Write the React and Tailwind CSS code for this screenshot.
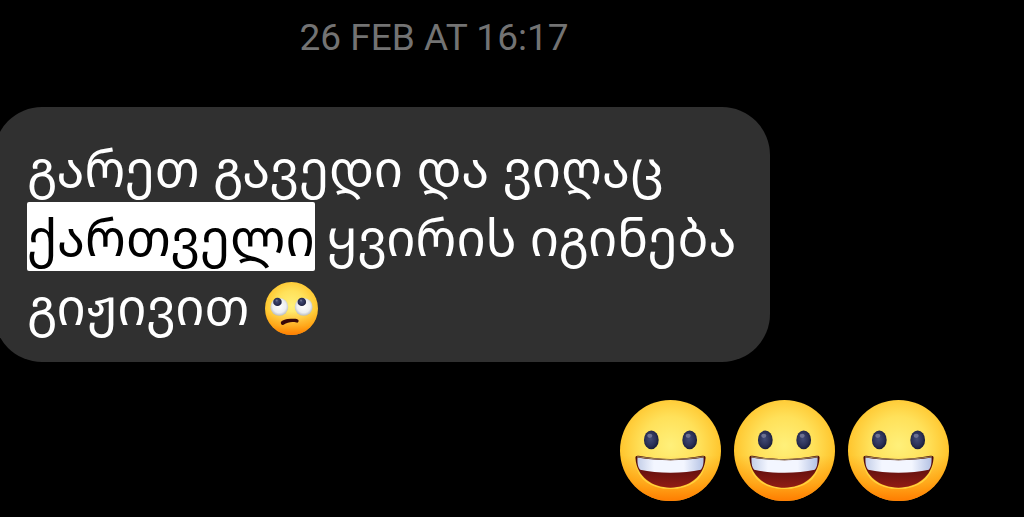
function FaceGradients({ id }) {
  return (
    <defs>
      <radialGradient id={`${id}-face`} cx="50" cy="45" r="57" gradientUnits="userSpaceOnUse">
        <stop offset="0" stopColor="#fff07a" />
        <stop offset="0.5" stopColor="#ffe15a" />
        <stop offset="0.88" stopColor="#ffc52d" />
        <stop offset="1" stopColor="#ffad1f" />
      </radialGradient>
      <linearGradient id={`${id}-shade`} x1="0" y1="0" x2="0" y2="1">
        <stop offset="0.55" stopColor="#ff8600" stopOpacity="0" />
        <stop offset="0.82" stopColor="#ff8600" stopOpacity="0.5" />
        <stop offset="1" stopColor="#ff7a00" stopOpacity="0.95" />
      </linearGradient>
      <radialGradient id={`${id}-pupil`} cx="0.45" cy="0.45" r="0.6">
        <stop offset="0" stopColor="#424b75" />
        <stop offset="0.6" stopColor="#2b3157" />
        <stop offset="1" stopColor="#151832" />
      </radialGradient>
      <radialGradient id={`${id}-white`} cx="0.5" cy="0.45" r="0.58">
        <stop offset="0" stopColor="#ffffff" />
        <stop offset="0.65" stopColor="#eceef0" />
        <stop offset="1" stopColor="#aeb2b8" />
      </radialGradient>
      <linearGradient id={`${id}-teeth`} x1="0" y1="0" x2="1" y2="0">
        <stop offset="0" stopColor="#c3cee8" />
        <stop offset="0.25" stopColor="#f3f6ff" />
        <stop offset="0.7" stopColor="#f3f6ff" />
        <stop offset="1" stopColor="#b4c2e4" />
      </linearGradient>
      <linearGradient id={`${id}-mouth`} x1="0" y1="0" x2="0" y2="1">
        <stop offset="0" stopColor="#45090b" />
        <stop offset="1" stopColor="#911c14" />
      </linearGradient>
    </defs>
  );
}

function GrinningFace({ id }) {
  return (
    <svg viewBox="0 0 100 100" className="size-[101px]" role="img" aria-label="grinning face">
      <FaceGradients id={id} />
      <circle cx="50" cy="50" r="50" fill={`url(#${id}-face)`} />
      <circle cx="50" cy="50" r="50" fill={`url(#${id}-shade)`} />
      <ellipse cx="31" cy="39.5" rx="7.3" ry="9.3" fill={`url(#${id}-pupil)`} />
      <ellipse cx="69" cy="39.5" rx="7.3" ry="9.3" fill={`url(#${id}-pupil)`} />
      <ellipse cx="29.5" cy="35.5" rx="2.5" ry="2" fill="#6c7191" />
      <ellipse cx="67.5" cy="35.5" rx="2.5" ry="2" fill="#6c7191" />
      <path
        d="M16 62C18 79 32 87.4 50 87.4S82 79 84 62"
        fill="none"
        stroke="#ffd23c"
        strokeWidth="1.6"
      />
      <path
        d="M15.3 57.5C15.1 55.3 16.8 54.8 18.5 55.3C38 59.4 62 59.4 81.5 55.3C83.2 54.8 84.9 55.3 84.7 57.5C83.5 76 68 86.8 50 86.8S16.5 76 15.3 57.5Z"
        fill={`url(#${id}-mouth)`}
      />
      <path
        d="M17.3 57C38 60.4 62 60.4 82.7 57C83 62 82.3 67 80 69C63 73 37 73 20 69C17.7 67 17 62 17.3 57Z"
        fill={`url(#${id}-teeth)`}
      />
      <path d="M17 56.3C38 59.8 62 59.8 83 56.3" fill="none" stroke="#a08a5c" strokeWidth="1" />
    </svg>
  );
}

function RollingEyesFace() {
  return (
    <svg
      viewBox="0 0 100 100"
      className="mt-1.5 size-[53px] shrink-0"
      role="img"
      aria-label="face with rolling eyes"
    >
      <FaceGradients id="rolling" />
      <circle cx="50" cy="50" r="50" fill="url(#rolling-face)" />
      <circle cx="50" cy="50" r="50" fill="url(#rolling-shade)" />
      <circle cx="27" cy="47" r="16.8" fill="url(#rolling-white)" />
      <circle cx="73" cy="47" r="16.8" fill="url(#rolling-white)" />
      <circle cx="23.5" cy="37.5" r="8" fill="url(#rolling-pupil)" />
      <circle cx="69.5" cy="37.5" r="8" fill="url(#rolling-pupil)" />
      <circle cx="22" cy="35" r="2" fill="#6c7191" />
      <circle cx="68" cy="35" r="2" fill="#6c7191" />
      <path
        d="M30 78C29 75 34 71 43 70C52 69 61 68.5 63 71.5C64.5 74 62 77.5 59.5 76.5C50 74.5 43 76 35 80.5C32.5 82 30.5 80.5 30 78Z"
        fill="#3a0808"
      />
    </svg>
  );
}

function ReceivedMessage() {
  return (
    <div className="-ml-1.5 w-fit rounded-[48px] bg-[#303030] pt-[26px] pr-[33px] pb-[22px] pl-[33px] text-[51px] leading-[69px] whitespace-nowrap text-white">
      <p>გარეთ გავედი და ვიღაც</p>
      <p className="flex gap-3">
        <mark className="rounded-xs bg-white text-black">ქართველი</mark>
        <span>ყვირის იგინება</span>
      </p>
      <p className="flex items-center gap-4">
        <span>გიჟივით</span>
        <RollingEyesFace />
      </p>
    </div>
  );
}

export default function App() {
  return (
    <main className="min-h-screen overflow-hidden bg-black pt-[17px] pb-4 font-['Noto_Sans','Noto_Sans_Georgian','DejaVu_Sans',sans-serif]">
      <time className="block pr-[156px] text-center font-[Roboto,sans-serif] text-[37px] leading-[42px] text-[#737373]">
        26 FEB AT 16:17
      </time>
      <div className="mt-12">
        <ReceivedMessage />
      </div>
      <div className="mt-[38px] flex justify-end gap-[13px] pr-[75px]">
        <GrinningFace id="grin-a" />
        <GrinningFace id="grin-b" />
        <GrinningFace id="grin-c" />
      </div>
    </main>
  );
}
